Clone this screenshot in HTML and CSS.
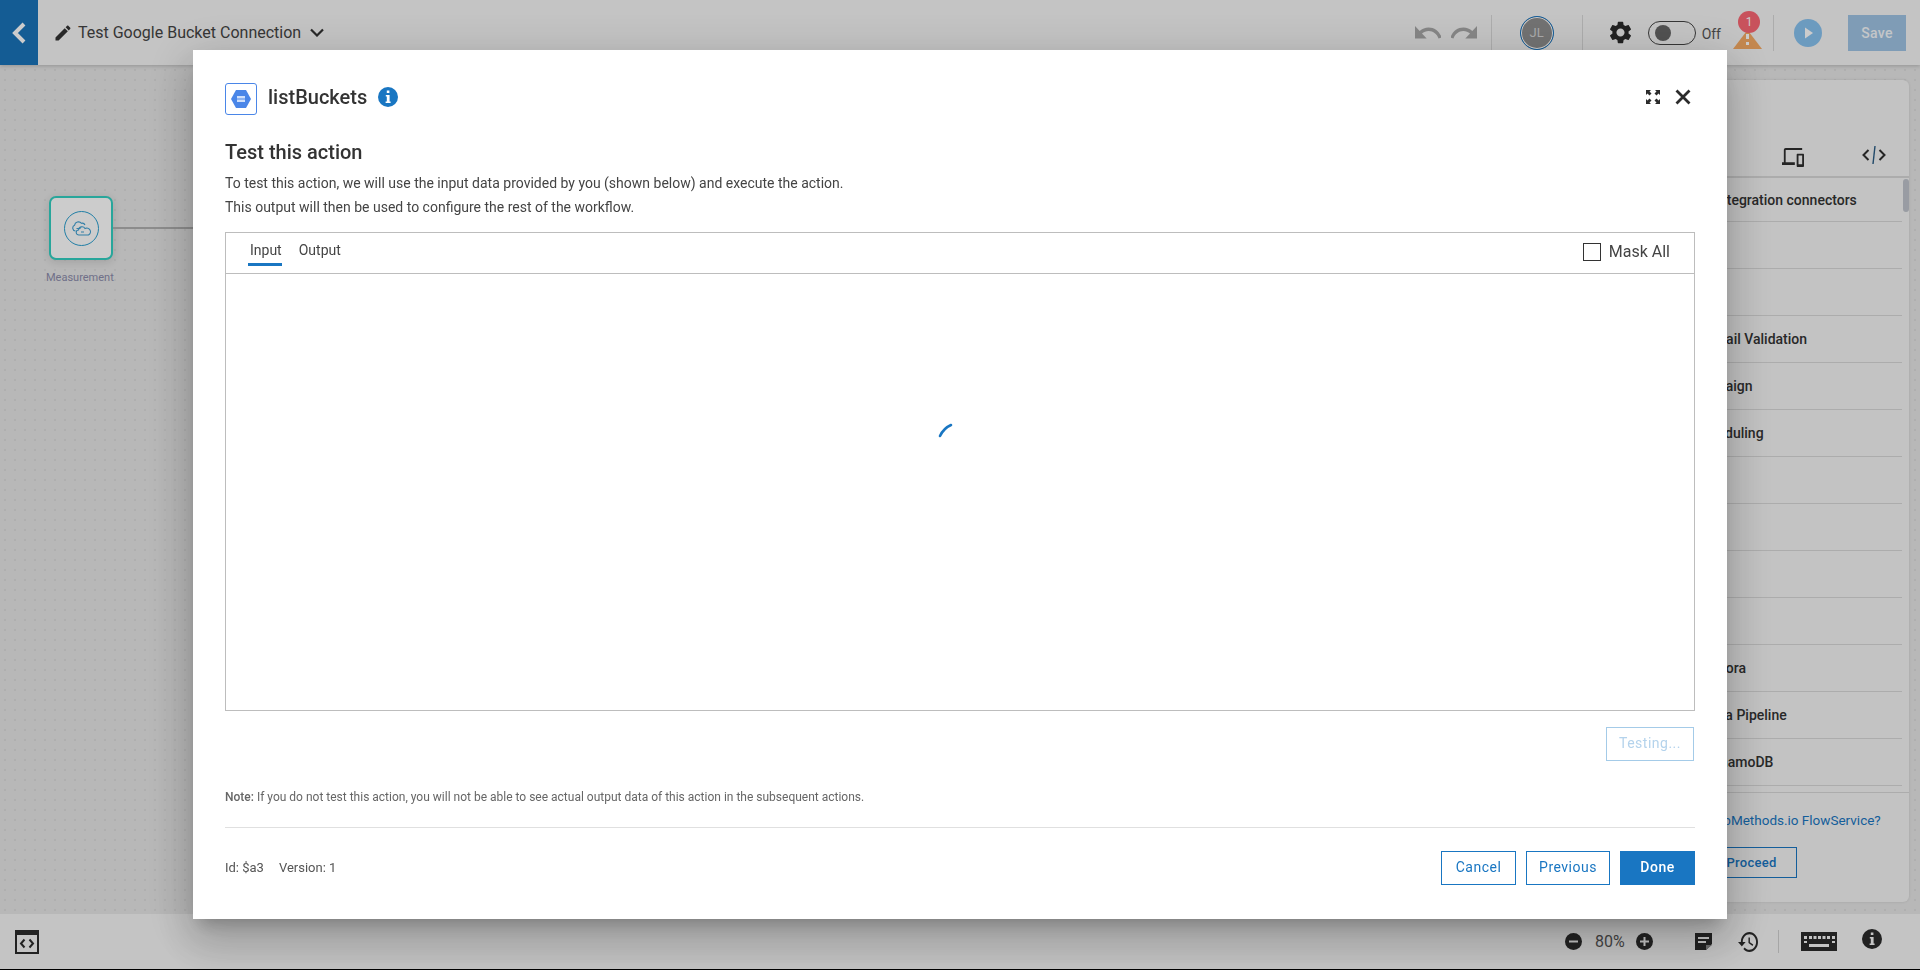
FILE: index.html
```html
<!DOCTYPE html>
<html lang="en">

<head>
    <meta charset="UTF-8">
    <meta name="viewport" content="width=device-width, initial-scale=1.0">
    <title>Test Google Bucket Connection</title>

    <link rel="stylesheet" href="styles.css">

</head>

<body>
    <div class="app">
        <!-- Top bar -->
        <header class="topbar">
            <a class="back-btn">
                <svg width="16" height="22" viewBox="0 0 16 22"><path d="M13 2 4 11l9 9" fill="none" stroke="#fff" stroke-width="4"/></svg>
            </a>
            <svg class="pencil" width="20" height="20" viewBox="0 0 24 24"><path d="M3 17.25V21h3.75L17.81 9.94l-3.75-3.75L3 17.25zM20.71 7.04c.39-.39.39-1.02 0-1.41l-2.34-2.34c-.39-.39-1.02-.39-1.41 0l-1.83 1.83 3.75 3.75 1.83-1.83z" fill="#333"/></svg>
            <span class="flow-name">Test Google Bucket Connection</span>
            <svg class="name-caret" width="14" height="9" viewBox="0 0 14 9"><path d="M1 1.5l6 6 6-6" fill="none" stroke="#333" stroke-width="2.2"/></svg>

            <div class="topbar-right">
                <svg class="undo" width="26" height="14" viewBox="2 7 20 10" preserveAspectRatio="none"><path d="M12.5 8c-2.65 0-5.05.99-6.9 2.6L2 7v9h9l-3.62-3.62c1.39-1.16 3.16-1.88 5.12-1.88 3.54 0 6.55 2.31 7.6 5.5l2.37-.78C21.08 11.03 17.15 8 12.5 8z" fill="#a8a8a8"/></svg>
                <svg class="redo" width="26" height="14" viewBox="2 7 20 10" preserveAspectRatio="none"><path d="M18.4 10.6C16.55 8.99 14.15 8 11.5 8c-4.65 0-8.58 3.03-9.96 7.22L3.9 16c1.05-3.19 4.05-5.5 7.6-5.5 1.95 0 3.73.72 5.12 1.88L13 16h9V7l-3.6 3.6z" fill="#a8a8a8"/></svg>
                <span class="bar-divider div-a"></span>
                <div class="avatar"><span>JL</span></div>
                <span class="bar-divider div-b"></span>
                <svg class="gear" width="27" height="27" viewBox="0 0 24 24"><path d="M19.14 12.94c.04-.3.06-.61.06-.94 0-.32-.02-.64-.07-.94l2.03-1.58c.18-.14.23-.41.12-.61l-1.92-3.32c-.12-.22-.37-.29-.59-.22l-2.39.96c-.5-.38-1.03-.7-1.62-.94l-.36-2.54c-.04-.24-.24-.41-.48-.41h-3.84c-.24 0-.43.17-.47.41l-.36 2.54c-.59.24-1.13.57-1.62.94l-2.39-.96c-.22-.08-.47 0-.59.22L2.74 8.87c-.12.21-.08.47.12.61l2.03 1.58c-.05.3-.09.63-.09.94s.02.64.07.94l-2.03 1.58c-.18.14-.23.41-.12.61l1.92 3.32c.12.22.37.29.59.22l2.39-.96c.5.38 1.03.7 1.62.94l.36 2.54c.05.24.24.41.48.41h3.84c.24 0 .44-.17.47-.41l.36-2.54c.59-.24 1.13-.56 1.62-.94l2.39.96c.22.08.47 0 .59-.22l1.92-3.32c.12-.22.07-.47-.12-.61l-2.01-1.58zM12 15.6c-1.98 0-3.6-1.62-3.6-3.6s1.62-3.6 3.6-3.6 3.6 1.62 3.6 3.6-1.62 3.6-3.6 3.6z" fill="#2b2b2b"/></svg>
                <div class="toggle"><span class="knob"></span></div>
                <span class="toggle-label">Off</span>
                <div class="warning">
                    <svg width="29" height="19" viewBox="0 0 29 19"><path d="M14.5 0 29 19H0z" fill="#f5aa64"/><rect x="13" y="4" width="3" height="5" fill="#fff"/><rect x="13" y="12" width="3" height="3" fill="#fff"/></svg>
                    <span class="warning-badge">1</span>
                </div>
                <span class="bar-divider div-c"></span>
                <svg class="play" width="28" height="28" viewBox="0 0 28 28"><circle cx="14" cy="14" r="14" fill="#88c2ef"/><path d="M11 8.5v11l8-5.500z" fill="#fff"/></svg>
                <button class="save-btn">Save</button>
            </div>
        </header>

        <!-- Canvas + right panel -->
        <main class="canvas">
            <div class="node">
                <div class="node-circle">
                    <svg width="20" height="15" viewBox="0 0 20 15" fill="none" stroke="#3f9fd2" stroke-width="1.100"><path d="M4.500 10A3 3 0 0 1 3.500 4.300 4 4 0 0 1 10.500 2.300 3 3 0 0 1 14 4"/><path d="M8 14a2.500 2.500 0 0 1-.5-5 3.500 3.500 0 0 1 6.500-1.500 3.100 3.100 0 0 1 3.500 6.500z"/><path d="M5.500 7.500h4M10 11h3"/></svg>
                </div>
            </div>
            <span class="node-line"></span>
            <span class="node-label">Measurement</span>

            <aside class="side-panel">
                <div class="panel-head">
                    <svg class="devices-icon" width="22" height="19" viewBox="0 0 24 20" preserveAspectRatio="none"><path d="M4 2h18V0H4C2.900 0 2 .9 2 2v13H0v3h14v-3H4V2zm19 4h-6c-.55 0-1 .45-1 1v12c0 .55.45 1 1 1h6c.55 0 1-.45 1-1V7c0-.55-.45-1-1-1zm-1 11h-4V8h4v9z" fill="#2f2f2f"/></svg>
                    <svg class="code-icon" width="24" height="18" viewBox="0 0 24 18" fill="none" stroke-width="2"><path d="M6.500 4 1.500 9l5 5M17.500 4l5 5-5 5" stroke="#2f2f2f"/><path d="M13 0l-2 18" stroke="#2b5d85" stroke-width="1.400"/></svg>
                </div>
                <div class="panel-list">
                    <div class="panel-row first-row row-far"><span>Integration connectors</span></div>
                    <div class="panel-row"></div>
                    <div class="panel-row"></div>
                    <div class="panel-row row-email"><span>Email Validation</span></div>
                    <div class="panel-row row-campaign"><span>Campaign</span></div>
                    <div class="panel-row row-schedule"><span>Scheduling</span></div>
                    <div class="panel-row"></div>
                    <div class="panel-row"></div>
                    <div class="panel-row"></div>
                    <div class="panel-row"></div>
                    <div class="panel-row"><span>Aurora</span></div>
                    <div class="panel-row"><span>Data Pipeline</span></div>
                    <div class="panel-row"><span>DynamoDB</span></div>
                    <span class="scroll-thumb"></span>
                </div>
                <div class="panel-foot">
                    <a class="foot-link">webMethods.io FlowService?</a>
                    <button class="proceed-btn">Proceed</button>
                </div>
            </aside>
        </main>

        <!-- Bottom bar -->
        <footer class="bottombar">
            <svg class="code-window" width="24" height="24" viewBox="0 0 24 24"><path d="M0 0h24v24H0zM2 5v17h20V5z" fill="#2b2b2b" fill-rule="evenodd"/><path d="M9.500 9.500 6 13.500l3.500 4M14.500 9.500l3.500 4-3.500 4" fill="none" stroke="#2b2b2b" stroke-width="2"/></svg>
            <div class="bottom-right">
                <svg width="17" height="17" viewBox="0 0 17 17"><circle cx="8.500" cy="8.500" r="8.500" fill="#2b2b2b"/><rect x="4" y="7.500" width="9" height="2" fill="#f5f5f5"/></svg>
                <span class="zoom-level">80%</span>
                <svg width="17" height="17" viewBox="0 0 17 17"><circle cx="8.500" cy="8.500" r="8.500" fill="#2b2b2b"/><path d="M4 7.500h3.500V4h2v3.500H13v2H9.500V13h-2V9.500H4z" fill="#f5f5f5"/></svg>
                <svg class="notes-icon" width="17" height="17" viewBox="0 0 17 17"><path d="M0 0h17v11l-6 6H0z" fill="#2b2b2b"/><path d="M3 4h11v2H3zM3 8h8v2H3z" fill="#f5f5f5"/><path d="M11 17v-5h6z" fill="#8a8a8a"/></svg>
                <svg class="history-icon" width="20" height="20" viewBox="1 3 21 18" preserveAspectRatio="none"><path d="M13 3c-4.970 0-9 4.030-9 9H1l3.890 3.890.07.14L9 12H6c0-3.870 3.130-7 7-7s7 3.130 7 7-3.130 7-7 7c-1.930 0-3.680-.79-4.940-2.060l-1.420 1.420C8.270 19.990 10.510 21 13 21c4.970 0 9-4.030 9-9s-4.030-9-9-9zm-1 5v5l4.280 2.540.72-1.210-3.500-2.080V8H12z" fill="#2b2b2b"/></svg>
                <span class="bar-divider div-d"></span>
                <svg class="keyboard-icon" width="36" height="19" viewBox="0 0 36 19"><rect width="36" height="19" fill="#2b2b2b"/><path d="M3 4h3v3H3zM8 4h3v3H8zM12.500 4h3v3h-3zM17 4h3v3h-3zM21.500 4h3v3h-3zM26 4h3v3h-3zM31 4h3v3h-3zM3 9h3v2H3zM31 9h3v2h-3zM8 12h20v3H8z" fill="#f5f5f5"/></svg>
                <svg class="info-small" width="20" height="20" viewBox="0 0 20 20"><circle cx="10" cy="10" r="10" fill="#2b2b2b"/><path d="M8.800 3.500h2.600v2.600H8.800zM7.800 8h3.800v6.500h1v1.600H7.600v-1.600h1.200V9.600h-1z" fill="#f5f5f5"/></svg>
            </div>
        </footer>
    </div>

    <!-- Test action dialog -->
    <div class="overlay">
        <div class="dialog">
            <div class="dialog-head">
                <div class="action-icon">
                    <svg width="20" height="18" viewBox="0 0 20 18"><path d="M5 0h10l5 9-5 9H5L0 9z" fill="#4a86e8"/><rect x="6" y="6" width="8" height="2.500" fill="#cfe0fb"/><rect x="6" y="9.500" width="8" height="2.500" fill="#cfe0fb"/></svg>
                </div>
                <span class="action-name">listBuckets</span>
                <svg class="info-icon" width="20" height="20" viewBox="0 0 20 20"><circle cx="10" cy="10" r="10" fill="#1976c2"/><path d="M8.800 3.500h2.600v2.600H8.800zM7.800 8h3.800v6.500h1v1.600H7.600v-1.600h1.200V9.600h-1z" fill="#fff"/></svg>
                <svg class="expand-icon" width="14" height="14" viewBox="0 0 14 14" fill="#2b2b2b"><path d="M0 0h5L3.500 1.500 5.500 3.500 3.500 5.500 1.500 3.500 0 5z"/><path d="M14 0H9l1.500 1.500-2 2 2 2 2-2L14 5z"/><path d="M0 14h5l-1.500-1.500 2-2-2-2-2 2L0 9z"/><path d="M14 14H9l1.500-1.500-2-2 2-2 2 2L14 9z"/></svg>
                <svg class="close-icon" width="16" height="16" viewBox="0 0 16 16"><path d="M1.500 1.500l13 13M14.500 1.500l-13 13" stroke="#2b2b2b" stroke-width="2.800"/></svg>
            </div>

            <h3 class="dialog-title">Test this action</h3>
            <p class="dialog-text">To test this action, we will use the input data provided by you (shown below) and execute the action.</p>
            <p class="dialog-text">This output will then be used to configure the rest of the workflow.</p>

            <div class="tab-bar">
                <a class="tab tab-active">Input</a>
                <a class="tab">Output</a>
                <label class="mask-all"><span class="checkbox"></span>Mask All</label>
            </div>
            <div class="tab-body">
                <svg class="spinner" width="48" height="48" viewBox="0 0 48 48"><path d="M4 15A22 22 0 0 1 15 4" fill="none" stroke="#1976c2" stroke-width="2.600" stroke-linecap="round"/></svg>
            </div>

            <div class="test-row">
                <button class="btn btn-testing">Testing...</button>
            </div>

            <p class="note"><b>Note:</b> If you do not test this action, you will not be able to see actual output data of this action in the subsequent actions.</p>

            <div class="dialog-foot">
                <span class="meta">Id: $a3</span>
                <span class="meta">Version: 1</span>
                <button class="btn btn-cancel">Cancel</button>
                <button class="btn btn-prev">Previous</button>
                <button class="btn btn-done">Done</button>
            </div>
        </div>
    </div>
</body>

</html>
```

FILE: styles.css
```css
* {
    box-sizing: border-box;
}

html,
body {
    margin: 0;
    height: 100%;
    overflow: hidden;
}

body {
    font-family: Roboto, "Liberation Sans", sans-serif;
    color: #333;
}

button {
    font-family: inherit;
}

.app {
    display: flex;
    flex-direction: column;
    height: 970px;
}

/* Top bar */
.topbar {
    display: flex;
    align-items: center;
    height: 65px;
    background: #f5f5f5;
    box-shadow: 0 1px 4px rgba(0, 0, 0, 0.2);
    position: relative;
    z-index: 2;
}

.back-btn {
    display: flex;
    align-items: center;
    justify-content: center;
    width: 38px;
    height: 65px;
    background: #1974ba;
}

.pencil {
    margin-left: 15px;
}

.flow-name {
    margin-left: 5px;
    font-size: 16px;
    color: #444;
}

.name-caret {
    margin-left: 9px;
}

.topbar-right {
    display: flex;
    align-items: center;
    margin-left: auto;
    margin-right: 14px;
}

.redo {
    margin-left: 10px;
}

.bar-divider {
    display: block;
    width: 1px;
    height: 36px;
    background: #d8d8d8;
}

.div-a {
    margin-left: 14px;
}

.avatar {
    display: flex;
    align-items: center;
    justify-content: center;
    width: 34px;
    height: 34px;
    margin-left: 28px;
    border: 1px solid #1976c2;
    border-radius: 50%;
    background: #8f8f8f;
    box-shadow: inset 0 0 0 1px #fff;
    color: #d6d6d6;
    font-size: 13px;
}

.div-b {
    margin-left: 28px;
}

.gear {
    margin-left: 24px;
}

.toggle {
    display: flex;
    align-items: center;
    width: 48px;
    height: 24px;
    margin-left: 14px;
    padding-left: 6px;
    border: 1px solid #444;
    border-radius: 12px;
}

.knob {
    width: 16px;
    height: 16px;
    border-radius: 50%;
    background: #666;
}

.toggle-label {
    margin-left: 6px;
    margin-top: 2px;
    font-size: 14px;
    color: #555;
}

.warning {
    position: relative;
    width: 29px;
    height: 19px;
    margin-left: 12px;
    margin-top: 13px;
}

.warning svg {
    display: block;
}

.warning-badge {
    position: absolute;
    top: -19px;
    left: 5px;
    width: 22px;
    height: 22px;
    border-radius: 50%;
    background: #fa6773;
    color: #fff;
    font-size: 12px;
    line-height: 22px;
    text-align: center;
}

.div-c {
    margin-left: 11px;
}

.play {
    margin-left: 20px;
}

.save-btn {
    width: 58px;
    height: 36px;
    margin-left: 26px;
    border: 0;
    background: #9fc4e4;
    color: #f5f8fb;
    font-size: 14px;
    font-weight: 500;
    letter-spacing: 0.3px;
}

/* Canvas */
.canvas {
    flex: 1;
    position: relative;
    display: flex;
    justify-content: flex-end;
    padding: 15px 11px 12px 0;
    background-color: #e6e6e6;
    background-image: radial-gradient(circle, #dbdbdb 1px, transparent 1.3px);
    background-size: 10px 10px;
}

.node {
    position: absolute;
    left: 49px;
    top: 131px;
    display: flex;
    align-items: center;
    justify-content: center;
    width: 64px;
    height: 64px;
    border: 2px solid #33d0c2;
    border-radius: 7px;
    background: #fff;
    box-shadow: 0 2px 8px rgba(0, 0, 0, 0.12);
}

.node-circle {
    display: flex;
    align-items: center;
    justify-content: center;
    width: 35px;
    height: 35px;
    border: 1px solid #2a9fd0;
    border-radius: 50%;
}

.node-line {
    position: absolute;
    left: 113px;
    top: 162px;
    width: 90px;
    height: 2px;
    background: #b0b0b0;
}

.node-label {
    position: absolute;
    left: 46px;
    top: 206px;
    font-size: 11px;
    color: #8c8cac;
}

/* Right panel */
.side-panel {
    display: flex;
    flex-direction: column;
    width: 400px;
    background: #f4f4f4;
    border-radius: 6px;
    box-shadow: 0 0 3px rgba(0, 0, 0, 0.1);
}

.panel-head {
    display: flex;
    align-items: flex-end;
    justify-content: flex-end;
    height: 98px;
    padding: 0 23px 9px 0;
    border-bottom: 2px solid #d8d8d8;
}

.code-icon {
    margin-left: 58px;
    margin-bottom: 3px;
}

.panel-list {
    position: relative;
    height: 614px;
    padding-right: 7px;
}

.panel-row {
    display: flex;
    align-items: center;
    height: 47px;
    padding-left: 195px;
    border-bottom: 1px solid #d8d8d8;
    font-size: 14px;
    font-weight: 500;
    color: #333;
}

.first-row {
    height: 44px;
}

/* Labels that start further along their row */
.row-far {
    padding-left: 206px;
}

.row-email {
    padding-left: 197px;
}

.row-campaign {
    padding-left: 180px;
}

.row-schedule {
    padding-left: 185px;
}

.scroll-thumb {
    position: absolute;
    top: 1px;
    right: 0;
    width: 6px;
    height: 33px;
    border-radius: 3px;
    background: #c0c4cc;
}

.panel-foot {
    flex: 1;
    display: flex;
    flex-direction: column;
    align-items: flex-start;
    padding: 17px 0 0 197px;
    border-top: 1px solid #d8d8d8;
}

.foot-link {
    font-size: 13.5px;
    line-height: 20px;
    white-space: nowrap;
    color: #1976c2;
}

.proceed-btn {
    width: 91px;
    height: 31px;
    margin-top: 17px;
    border: 1px solid #1976c2;
    background: transparent;
    color: #1976c2;
    font-size: 13px;
    font-weight: 500;
    letter-spacing: 0.3px;
}

/* Bottom bar */
.bottombar {
    display: flex;
    align-items: center;
    height: 56px;
    padding-left: 15px;
    background: #f5f5f5;
    border-bottom: 1px solid #000;
    position: relative;
    z-index: 2;
}

.bottom-right {
    display: flex;
    align-items: center;
    margin-left: auto;
    margin-right: 38px;
}

.zoom-level {
    width: 30px;
    margin: 0 11px 0 13px;
    font-size: 16px;
    color: #555;
}

.notes-icon {
    margin-left: 42px;
}

.history-icon {
    margin-left: 26px;
}

.div-d {
    height: 23px;
    margin-left: 20px;
    background: #d0d0d0;
}

.keyboard-icon {
    margin-left: 22px;
}

.info-small {
    margin-left: 25px;
    margin-top: -6px;
}

/* Dialog */
.overlay {
    position: fixed;
    inset: 0;
    z-index: 10;
    display: flex;
    justify-content: center;
    align-items: flex-start;
    padding-top: 50px;
    background: rgba(0, 0, 0, 0.2);
}

.dialog {
    width: 1534px;
    height: 869px;
    padding: 33px 32px 0;
    background: #fff;
    box-shadow: 0 11px 15px -7px rgba(0, 0, 0, 0.2), 0 24px 38px 3px rgba(0, 0, 0, 0.14), 0 9px 46px 8px rgba(0, 0, 0, 0.12);
}

.dialog-head {
    display: flex;
    align-items: center;
    height: 32px;
    padding-bottom: 4px;
}

.action-icon {
    display: flex;
    align-items: center;
    justify-content: center;
    align-self: flex-start;
    width: 32px;
    height: 32px;
    border: 1px solid #4a86e8;
    border-radius: 3px;
}

.action-name {
    margin-left: 11px;
    font-size: 20px;
    font-weight: 500;
    color: #333;
}

.info-icon {
    margin-left: 11px;
}

.expand-icon {
    margin-left: auto;
    margin-right: 15px;
}

.close-icon {
    margin-right: 4px;
}

.dialog-title {
    margin: 25px 0 7px;
    font-size: 20px;
    font-weight: 500;
    line-height: 24px;
    color: #333;
}

.dialog-text {
    margin: 0;
    font-size: 14px;
    line-height: 24px;
    color: #444;
}

.tab-bar {
    display: flex;
    align-items: flex-start;
    height: 42px;
    margin-top: 13px;
    border: 1px solid #bdbdbd;
}

.tab {
    margin: 8px 0 0 15px;
    padding: 0 0 4px 2px;
    border-bottom: 3px solid transparent;
    font-size: 14px;
    line-height: 18px;
    color: #444;
}

.tab:first-child {
    margin-left: 22px;
}

.tab-active {
    border-bottom-color: #1976c2;
}

.mask-all {
    display: flex;
    align-items: center;
    margin: 10px 24px 0 auto;
    font-size: 16px;
    line-height: 18px;
    color: #444;
}

.checkbox {
    width: 18px;
    height: 18px;
    margin-right: 8px;
    border: 1px solid #333;
}

.tab-body {
    display: flex;
    align-items: center;
    justify-content: center;
    height: 438px;
    margin-top: -1px;
    padding-bottom: 94px;
    border: 1px solid #bdbdbd;
}

.test-row {
    display: flex;
    justify-content: flex-end;
    margin-top: 16px;
    padding-right: 1px;
}

.btn {
    height: 34px;
    padding: 0 0 2px;
    border: 1px solid #1976c2;
    background: #fff;
    color: #1976c2;
    font-size: 14px;
    letter-spacing: 0.5px;
}

.btn-testing {
    width: 88px;
    border-color: #a4cbe8;
    color: #b4d3ec;
}

.note {
    margin: 28px 0 22px;
    font-size: 12px;
    line-height: 16px;
    color: #666;
}

.note b {
    font-weight: 500;
}

.dialog-foot {
    display: flex;
    align-items: center;
    padding-top: 23px;
    border-top: 1px solid #e0e0e0;
}

.meta {
    margin-right: 15px;
    padding-bottom: 2px;
    font-size: 13px;
    color: #555;
}

.btn-cancel {
    width: 75px;
    margin-left: auto;
}

.btn-prev {
    width: 84px;
    margin-left: 10px;
}

.btn-done {
    width: 75px;
    margin-left: 10px;
    background: #1976c2;
    color: #fff;
    font-weight: 500;
}
```
